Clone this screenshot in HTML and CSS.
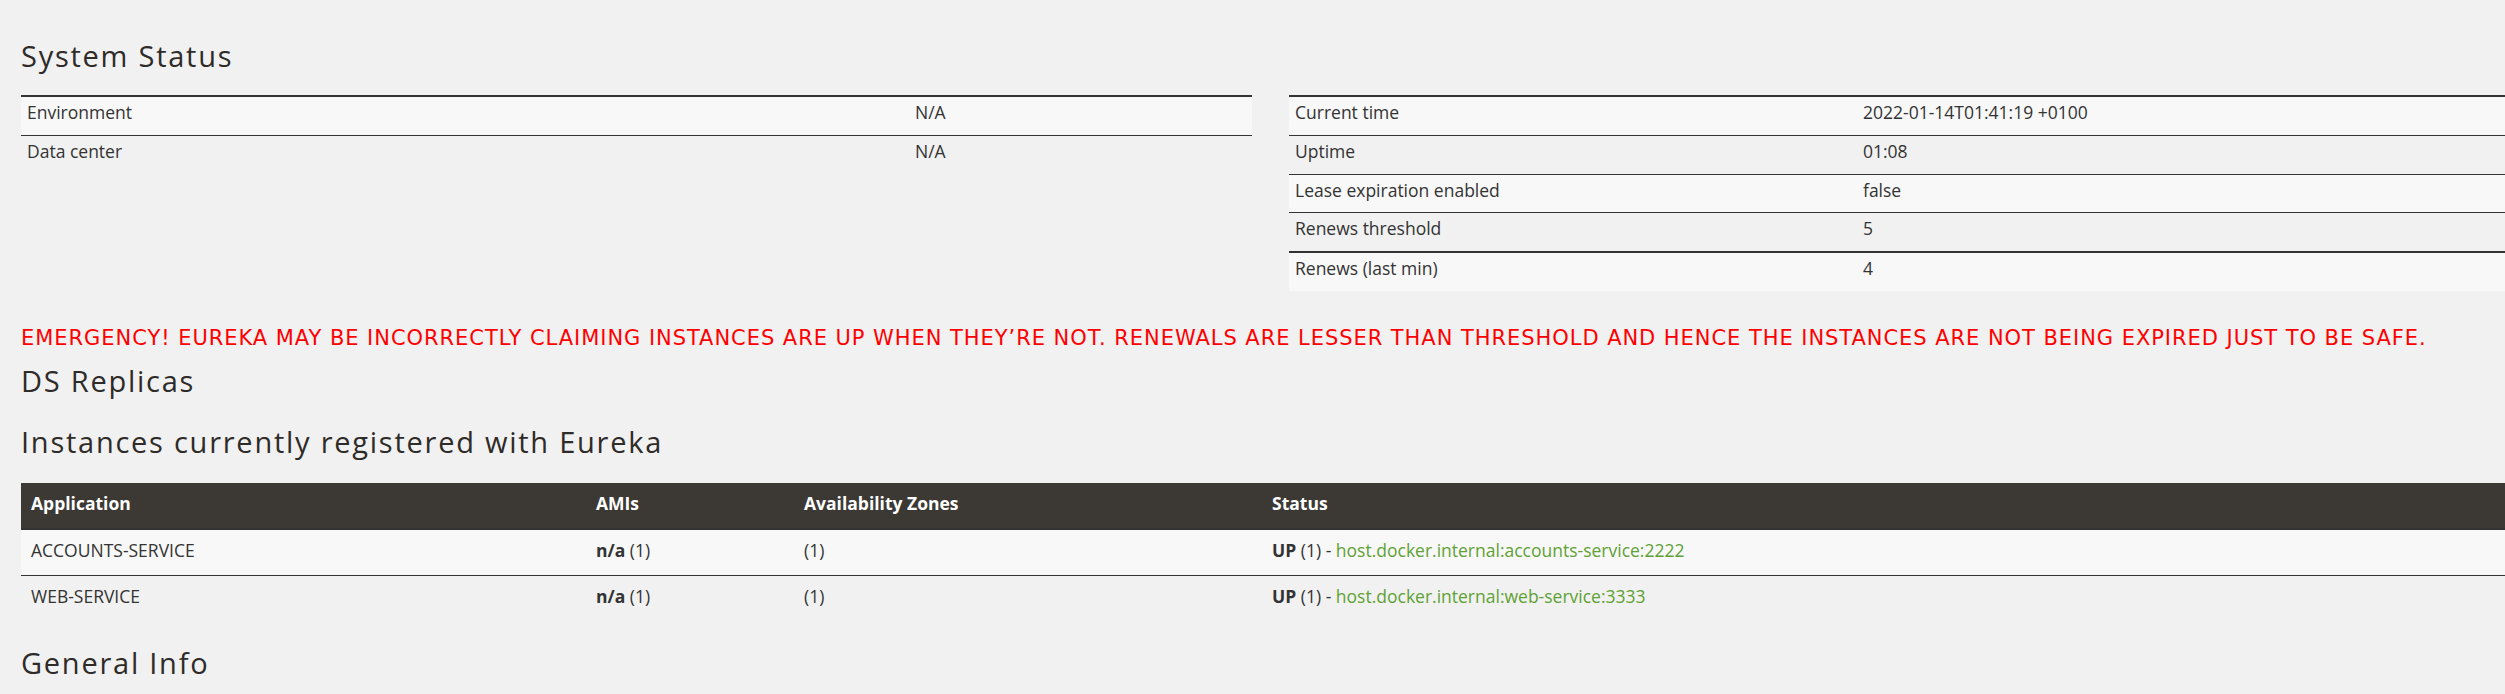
FILE: index.html
```html
<!DOCTYPE html>
<html>
<head>
<meta charset="utf-8">
<title>Eureka</title>
<link rel="stylesheet" href="styles.css">
</head>
<body>
<div class="page">
  <h2 class="heading heading-first">System Status</h2>
  <div class="status-row">
    <table class="kv kv-left">
      <tbody>
        <tr class="odd"><td class="label">Environment</td><td>N/A</td></tr>
        <tr><td class="label">Data center</td><td>N/A</td></tr>
      </tbody>
    </table>
    <table class="kv kv-right">
      <tbody>
        <tr class="odd"><td class="label">Current time</td><td>2022-01-14T01:41:19 +0100</td></tr>
        <tr><td class="label">Uptime</td><td>01:08</td></tr>
        <tr class="odd"><td class="label">Lease expiration enabled</td><td>false</td></tr>
        <tr><td class="label">Renews threshold</td><td>5</td></tr>
      </tbody>
      <tbody class="second">
        <tr class="odd"><td class="label">Renews (last min)</td><td>4</td></tr>
      </tbody>
    </table>
  </div>
  <h4 class="emergency">EMERGENCY! EUREKA MAY BE INCORRECTLY CLAIMING INSTANCES ARE UP WHEN THEY’RE NOT. RENEWALS ARE LESSER THAN THRESHOLD AND HENCE THE INSTANCES ARE NOT BEING EXPIRED JUST TO BE SAFE.</h4>
  <h2 class="heading heading-ds">DS Replicas</h2>
  <h2 class="heading heading-inst">Instances currently registered with Eureka</h2>
  <table class="instances">
    <thead>
      <tr>
        <th class="c-app">Application</th>
        <th class="c-ami">AMIs</th>
        <th class="c-az">Availability Zones</th>
        <th class="c-status">Status</th>
      </tr>
    </thead>
    <tbody>
      <tr class="odd">
        <td>ACCOUNTS-SERVICE</td>
        <td><b>n/a</b> (1)</td>
        <td>(1)</td>
        <td><b>UP</b> (1) - <a class="link" href="#">host.docker.internal:accounts-service:2222</a></td>
      </tr>
      <tr>
        <td>WEB-SERVICE</td>
        <td><b>n/a</b> (1)</td>
        <td>(1)</td>
        <td><b>UP</b> (1) - <a class="link" href="#">host.docker.internal:web-service:3333</a></td>
      </tr>
    </tbody>
  </table>
  <h2 class="heading heading-gen">General Info</h2>
</div>
</body>
</html>
```

FILE: styles.css
```css
html, body {
  margin: 0;
  padding: 0;
  overflow: hidden;
  background: #f1f1f1;
}

body {
  font-family: "Open Sans", "Liberation Sans", sans-serif;
  font-size: 17.5px;
  color: #333;
}

.page {
  width: 2500px;
  padding: 38px 0 0 21px;
}

.heading {
  margin: 0;
  font-family: "Open Sans", "Liberation Sans", sans-serif;
  font-weight: 400;
  font-size: 29px;
  line-height: 36px;
  letter-spacing: 1.75px;
  color: #2e2b28;
}

.status-row {
  margin-top: 21px;
  display: grid;
  grid-template-columns: 1231px 1231px;
  column-gap: 37px;
  align-items: start;
}

table {
  border-collapse: collapse;
  border-spacing: 0;
}

.kv {
  width: 100%;
}

.kv td {
  padding: 3px 6px 9px;
  line-height: 25.75px;
  border-top: 1px solid #333;
  text-align: left;
  vertical-align: top;
}

.kv tbody:first-child tr:first-child td {
  border-top-width: 2px;
}

.kv tbody.second tr:first-child td {
  border-top-width: 2px;
}

.kv tr.odd td {
  background: #f8f8f8;
}

.kv-left .label {
  width: 876px;
}

.kv-right .label {
  width: 556px;
}

.emergency {
  margin: 34px 0 0;
  font-family: "DejaVu Sans", "Open Sans", sans-serif;
  font-weight: 400;
  font-size: 21px;
  line-height: 26px;
  letter-spacing: 0.95px;
  color: #ff0000;
  white-space: nowrap;
}

.heading-ds {
  margin-top: 12px;
}

.heading-inst {
  margin-top: 25px;
}

.instances {
  margin-top: 23px;
  width: 2500px;
  table-layout: fixed;
}

.instances th,
.instances td {
  box-sizing: border-box;
}

.instances th {
  background: #3c3934;
  color: #ffffff;
  font-weight: 700;
  text-align: left;
  padding: 8px 10px 12px;
  line-height: 25px;
}

.instances td {
  padding: 8px 10px 12px;
  line-height: 25px;
  border-top: 1px solid #333;
  text-align: left;
  white-space: nowrap;
}

.instances tbody tr:first-child td {
  border-top-width: 2px;
}

.instances tr.odd td {
  background: #f8f8f8;
}

.instances b {
  font-weight: 700;
}

.c-app { width: 565px; }
.c-ami { width: 208px; }
.c-az { width: 468px; }

.link {
  color: #5fa134;
  text-decoration: none;
}

.heading-gen {
  margin-top: 24px;
}
```
